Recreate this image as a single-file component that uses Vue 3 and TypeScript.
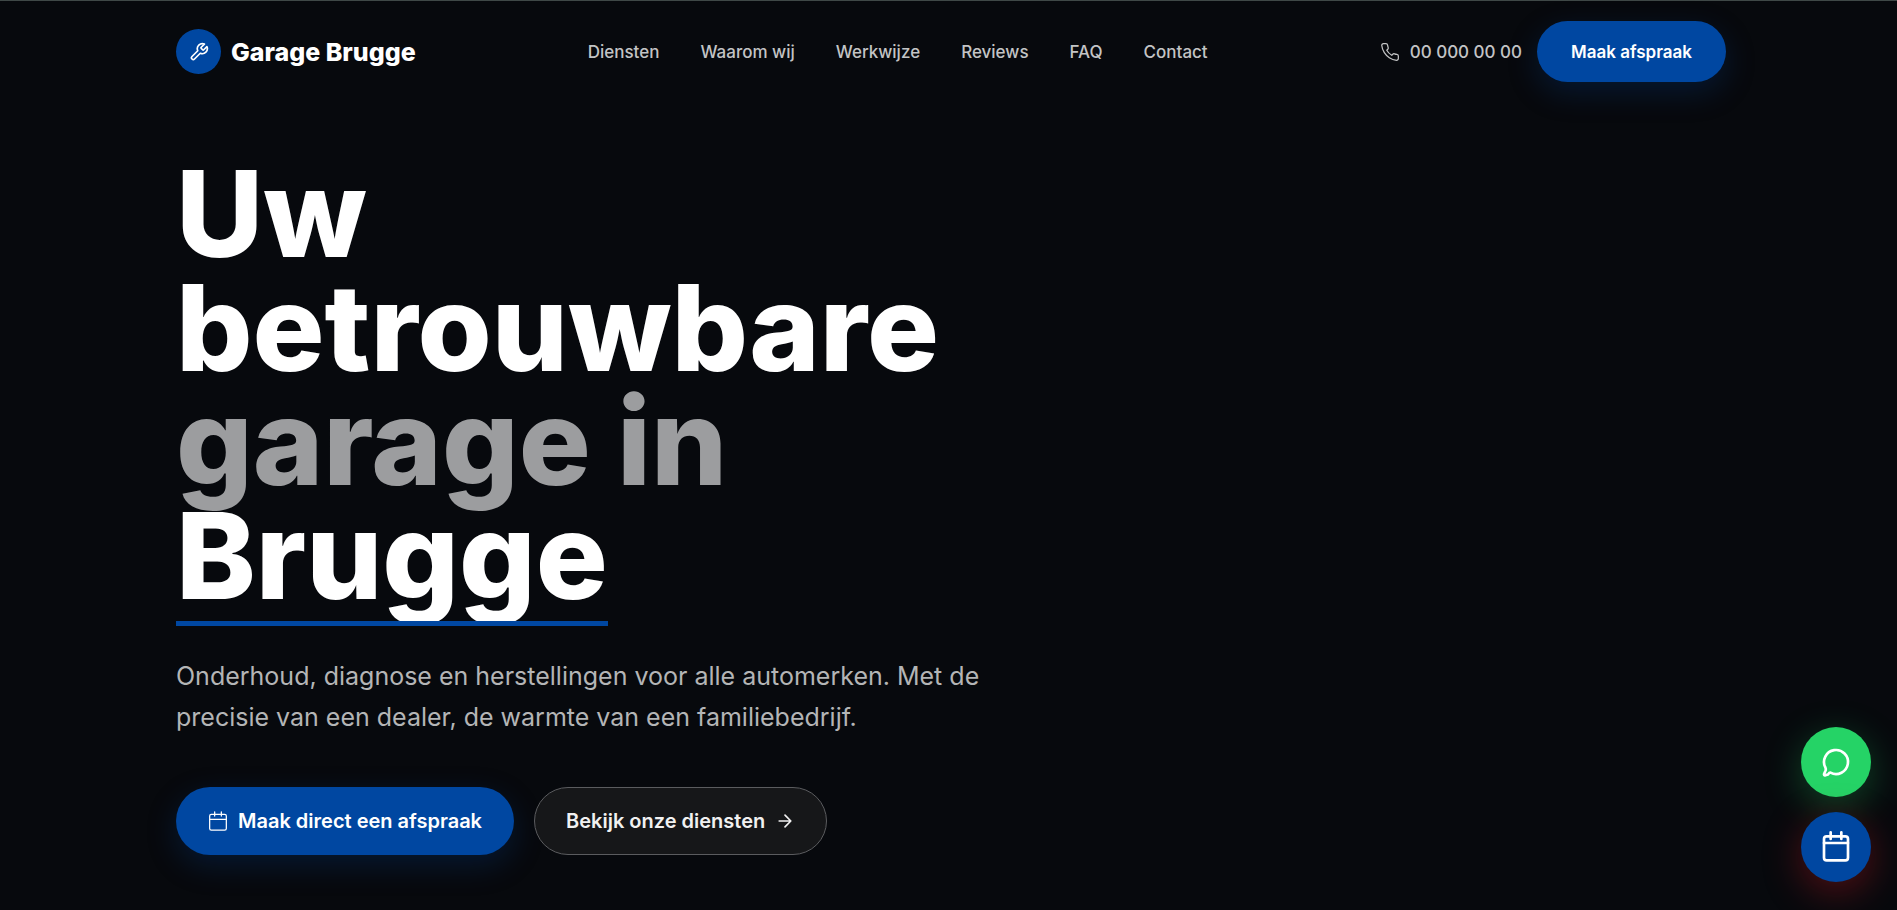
<script setup lang="ts">
interface NavItem {
  label: string
  href: string
}

const navItems: NavItem[] = [
  { label: 'Diensten', href: '#diensten' },
  { label: 'Waarom wij', href: '#waarom' },
  { label: 'Werkwijze', href: '#werkwijze' },
  { label: 'Reviews', href: '#reviews' },
  { label: 'FAQ', href: '#faq' },
  { label: 'Contact', href: '#contact' },
]
</script>

<template>
  <div class="page">
    <header class="header container">
      <a class="brand" href="#top">
        <span class="brand-mark">
          <svg class="icon" width="20" height="20" viewBox="0 0 24 24" aria-hidden="true">
            <path d="M14.7 6.3a1 1 0 0 0 0 1.4l1.6 1.6a1 1 0 0 0 1.4 0l3.77-3.77a6 6 0 0 1-7.94 7.94l-6.91 6.91a2.12 2.12 0 0 1-3-3l6.91-6.91a6 6 0 0 1 7.94-7.94l-3.76 3.76z" />
          </svg>
        </span>
        <span class="brand-name">Garage Brugge</span>
      </a>
      <nav class="nav" aria-label="Hoofdnavigatie">
        <a v-for="item in navItems" :key="item.href" :href="item.href">{{ item.label }}</a>
      </nav>
      <div class="actions">
        <a class="phone" href="tel:000000000">
          <svg class="icon thin" width="20" height="20" viewBox="0 0 24 24" aria-hidden="true">
            <path d="M22 16.92v3a2 2 0 0 1-2.18 2 19.79 19.79 0 0 1-8.63-3.07 19.5 19.5 0 0 1-6-6 19.79 19.79 0 0 1-3.07-8.67A2 2 0 0 1 4.11 2h3a2 2 0 0 1 2 1.72 12.84 12.84 0 0 0 .7 2.81 2 2 0 0 1-.45 2.11L8.09 9.91a16 16 0 0 0 6 6l1.27-1.27a2 2 0 0 1 2.11-.45 12.84 12.84 0 0 0 2.81.7A2 2 0 0 1 22 16.92z" />
          </svg>
          <span>00 000 00 00</span>
        </a>
        <button class="btn small" type="button">Maak afspraak</button>
      </div>
    </header>

    <main class="hero container">
      <h1>
        <span class="line">Uw</span>
        <span class="line">betrouwbare</span>
        <span class="line muted">garage in</span>
        <span class="line underlined">Brugge</span>
      </h1>
      <p class="lead">
        Onderhoud, diagnose en herstellingen voor alle automerken. Met de precisie van een dealer, de warmte van een familiebedrijf.
      </p>
      <div class="cta">
        <button class="btn" type="button">
          <svg class="icon thin" width="20" height="20" viewBox="0 0 24 24" aria-hidden="true">
            <path d="M8 1v5M16 1v5M2 10h20" />
            <rect x="2" y="4" width="20" height="19" rx="2" />
          </svg>
          <span>Maak direct een afspraak</span>
        </button>
        <button class="btn ghost" type="button">
          <span>Bekijk onze diensten</span>
          <svg class="icon" width="20" height="20" viewBox="0 0 24 24" aria-hidden="true">
            <path d="M5 12h14M12 5l7 7-7 7" />
          </svg>
        </button>
      </div>
    </main>

    <div class="floating">
      <button class="fab chat" type="button" aria-label="Chat">
        <svg class="icon" width="32" height="32" viewBox="0 0 24 24" aria-hidden="true">
          <path d="M7.9 20A9 9 0 1 0 4 16.1Q4.6 17.3 4.2 18.4L3.1 20.8Q2.7 22.2 4 22L6 21.3Q7 19.9 7.9 20Z" />
        </svg>
      </button>
      <button class="fab plan" type="button" aria-label="Afspraak">
        <svg class="icon" width="32" height="32" viewBox="0 0 24 24" aria-hidden="true">
          <path d="M8 1v5M16 1v5M3 9h18" />
          <rect x="3" y="4" width="18" height="18" rx="2" />
        </svg>
      </button>
    </div>
  </div>
</template>

<style>
body {
  background: #07090d;
}
</style>

<style scoped>
.page {
  min-height: 100vh;
  box-sizing: border-box;
  padding-left: 5px;
  border-top: 1px solid #3f4847;
  background: #07090d;
  color: #fff;
  font-family: Inter, 'Liberation Sans', sans-serif;
}
.container {
  max-width: 1550px;
  margin: 0 auto;
}
.header {
  display: flex;
  align-items: center;
  justify-content: space-between;
  padding: 20px 0;
}
a {
  color: inherit;
  text-decoration: none;
}
.icon {
  display: block;
  flex: none;
  fill: none;
  stroke: currentColor;
  stroke-width: 2;
  stroke-linecap: round;
  stroke-linejoin: round;
}
.thin {
  stroke-width: 1.5;
}
.brand,
.phone,
.actions,
.cta {
  display: flex;
  align-items: center;
}
.brand {
  gap: 10px;
}
.brand-mark {
  display: grid;
  place-items: center;
  width: 45px;
  height: 45px;
  border-radius: 50%;
  background: #0047a1;
}
.brand-name {
  font-size: 25px;
  font-weight: 800;
}
.nav {
  display: flex;
  gap: 41px;
  color: #c3c4c5;
  font-size: 17px;
  font-weight: 500;
}
.actions {
  gap: 15px;
}
.phone {
  gap: 10px;
  color: #c3c4c5;
  font-size: 17px;
  font-weight: 500;
}
.btn {
  display: flex;
  align-items: center;
  gap: 10px;
  height: 68px;
  padding: 0 32px;
  border: 0;
  border-radius: 40px;
  background: #0047a1;
  box-shadow: 0 10px 30px rgba(0, 71, 161, 0.25);
  color: #fff;
  font: inherit;
  font-size: 20px;
  font-weight: 600;
}
.btn.small {
  height: 61px;
  padding: 0 34px;
  font-size: 17px;
}
.btn.ghost {
  padding: 0 31px;
  border: 1px solid #5b5c5f;
  background: #161719;
  box-shadow: none;
  color: #f1f1f1;
}
h1 {
  margin: 0;
  font-size: 120px;
  line-height: 114px;
  font-weight: 800;
}
.hero {
  padding-top: 55px;
}
.line {
  display: block;
  width: max-content;
}
.muted {
  color: #9c9d9f;
}
.underlined {
  position: relative;
  padding-bottom: 13px;
}
.underlined::after {
  content: '';
  position: absolute;
  right: 0;
  bottom: 0;
  left: 0;
  height: 5px;
  background: #0047a1;
}
.lead {
  max-width: 840px;
  margin: 30px 0 49px;
  color: #b4b5b6;
  font-size: 25px;
  line-height: 41px;
}
.cta {
  gap: 20px;
}
.floating {
  position: fixed;
  right: 26px;
  bottom: 28px;
  display: grid;
  gap: 15px;
}
.fab {
  display: grid;
  place-items: center;
  width: 70px;
  height: 70px;
  padding: 0;
  border: 0;
  border-radius: 50%;
  color: #fff;
}
.chat {
  background: #25d366;
  box-shadow: 0 10px 38px rgba(37, 211, 102, 0.3);
}
.plan {
  background: #0047a1;
  box-shadow: 0 10px 38px rgba(225, 29, 36, 0.35);
}
</style>
